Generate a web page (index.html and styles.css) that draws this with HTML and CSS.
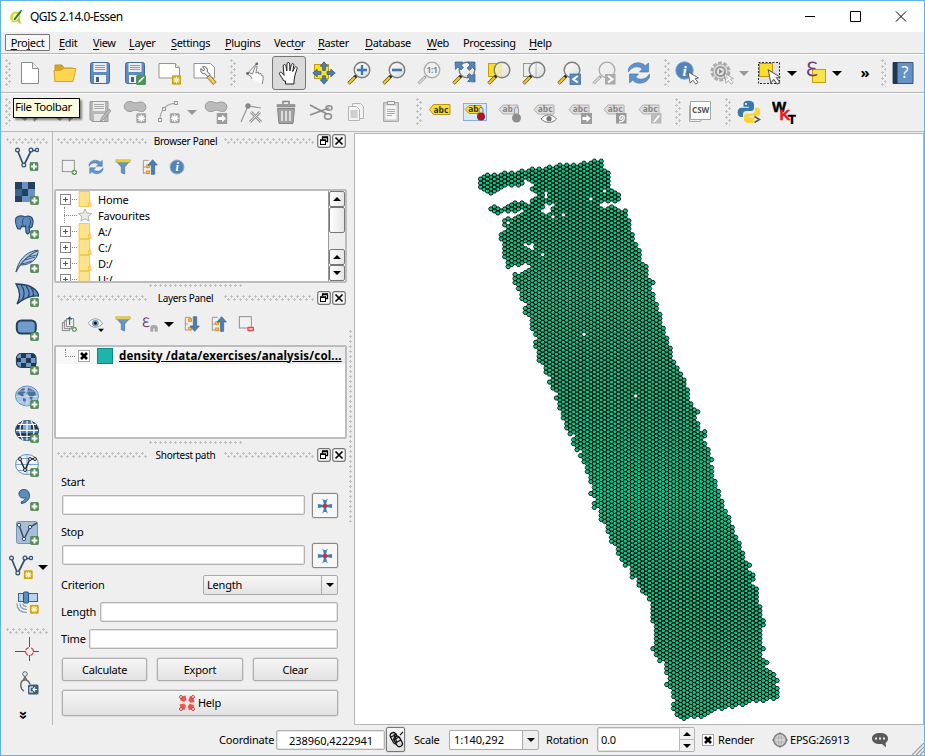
FILE: index.html
```html
<!DOCTYPE html>
<html lang="en">
<head>
<meta charset="utf-8">
<title>QGIS 2.14.0-Essen</title>
<link rel="stylesheet" href="styles.css">
</head>
<body>
<svg class="defs" aria-hidden="true">
<defs>
<linearGradient id="lens" x1="0" y1="0" x2="1" y2="1"><stop offset="0" stop-color="#fff"/><stop offset="1" stop-color="#d9dbd8"/></linearGradient>
<symbol id="plus" viewBox="0 0 9 9"><rect x=".3" y=".3" width="8.4" height="8.4" rx="1.6" fill="#568f56" stroke="#447b47" stroke-width=".6"/><path d="M4.5 1.6v5.8M1.6 4.5h5.8" stroke="#fff" stroke-width="1.9"/></symbol>
<symbol id="star" viewBox="0 0 10 10"><rect x=".3" y=".3" width="9.4" height="9.4" rx="1.4" fill="#cfa50d"/><path d="M5 1.5v7M1.5 5h7M2.4 2.6l5.2 4.8M7.6 2.6l-5.2 4.8" stroke="#fff7d5" stroke-width="1.2"/></symbol>
<symbol id="gstar" viewBox="0 0 10 10"><rect x=".3" y=".3" width="9.4" height="9.4" rx="1.4" fill="#a5a5a5"/><path d="M5 1.5v7M1.5 5h7M2.4 2.6l5.2 4.8M7.6 2.6l-5.2 4.8" stroke="#fff" stroke-width="1.2"/></symbol>
<symbol id="garrow" viewBox="0 0 11 11"><rect width="11" height="11" fill="#9c9c9c"/><path d="M1.5 4h4V1.8L9.7 5.5 5.5 9.2V7h-4z" fill="#fff"/></symbol>
<symbol id="cursor" viewBox="0 0 12 14"><path d="M1 .8l2.2 11.4 2.6-3 3 4 2.3-1.7-3-3.8 3.3-.7z" fill="#fff" stroke="#555" stroke-width=".9"/></symbol>
<symbol id="mag" viewBox="0 0 24 24"><path d="M1.500 22.500l7.300-7.300" stroke="#6b5410" stroke-width="3.400"/><path d="M1.800 22.200l6-6" stroke="#f6c728" stroke-width="2"/><circle cx="9" cy="15" r="1.600" fill="#222"/><circle cx="15" cy="9" r="7.800" fill="url(#lens)" fill-opacity=".85" stroke="#7b7d7a" stroke-width="1.400"/></symbol>
<symbol id="gmag" viewBox="0 0 24 24"><path d="M1.500 22.500l7.300-7.300" stroke="#a0a0a0" stroke-width="3"/><path d="M1.800 22.200l6-6" stroke="#ddd" stroke-width="1.500"/><circle cx="15" cy="9" r="7.800" fill="#efefef" stroke="#aaa" stroke-width="1.300"/></symbol>
<symbol id="new" viewBox="0 0 24 24"><path d="M3.500 1.500h11l6 6v15h-17z" fill="#fff" stroke="#8c8c8c"/><path d="M14.500 1.500v6h6" fill="#eee" stroke="#8c8c8c"/></symbol>
<symbol id="open" viewBox="0 0 24 24"><path d="M2 20.500V4h7l2 3h9v4" fill="#d6a52a" stroke="#c79521"/><path d="M2 20.500L1 9.500h7l2-2h13l-3 13z" fill="#fbd64e" stroke="#d5a62c"/></symbol>
<symbol id="save" viewBox="0 0 24 24"><rect x="2.500" y="1.500" width="19" height="21" rx="2" fill="#5f8cbf" stroke="#456c99"/><rect x="5.500" y="2" width="13" height="9" fill="#eee"/><path d="M7 4.500h10M7 6.500h10M7 8.500h10" stroke="#999"/><rect x="6" y="14" width="12" height="8" fill="#eef0f2"/><rect x="8" y="16" width="3" height="5" fill="#445f80"/></symbol>
<symbol id="saveas" viewBox="0 0 24 24"><use href="#save"/><rect x="13" y="14" width="10" height="10" rx="1.500" fill="#4c9457"/><path d="M15 22l1-2.500 4.500-4 1 1-4.500 4.500z" fill="#fff"/></symbol>
<symbol id="comp" viewBox="0 0 24 24"><path d="M1 2.500h16.500l4 4v10.500H1z" fill="#fff" stroke="#949494"/><path d="M17.500 2.500v4h4" fill="#eee" stroke="#949494"/><use href="#star" x="13.500" y="14" width="10" height="10"/></symbol>
<symbol id="compman" viewBox="0 0 24 24"><path d="M1 2.500h16.500l4 4v10.500H1z" fill="#fff" stroke="#949494"/><path d="M15 15l7 7.500" stroke="#ad8832" stroke-width="4.500"/><path d="M15 15l6.500 7" stroke="#f3d26e" stroke-width="2.400"/><path d="M8 7.500a3.800 3.800 0 0 0 4.300 5.300l2.500 3 2.500-2.300-3-2.700a3.800 3.800 0 0 0-4.700-5l2 2.400-1.300 1.800z" fill="#f3f3f3" stroke="#555" stroke-width=".9"/></symbol>
<symbol id="touch" viewBox="0 0 24 24"><path d="M10 18l-1-2.500-3.500-2.500 1.500-1.500 3.500 1.500L13.500 5l1.700.5-1.400 6.500 2.700-1 .3 2 2.200-.6.300 2 1.700.3.200 3-1 5.300" fill="#fff" stroke="#777" stroke-width=".9"/><path d="M5.500 12.500L15 2" stroke="#666" stroke-width=".8"/><circle cx="14.800" cy="2.800" r="1.400" fill="#666"/><circle cx="5.500" cy="12.500" r="1.400" fill="#666"/></symbol>
<symbol id="hand" viewBox="0 0 24 24"><path d="M7 20L2.500 13.200C1.500 11.500 4 10.500 5 12l2 2.300L6.200 5c0-1.900 2.400-2 2.700-.2L9.800 10 10 2.800c.1-1.800 2.500-1.800 2.700 0l.2 7 1.500-6.200c.5-1.700 2.700-1.200 2.500.6L15.700 10.500l2-4c.9-1.500 2.900-.5 2.300 1.300L18 14l-1 6v3H8.500v-3z" fill="#fff" stroke="#222"/></symbol>
<symbol id="pansel" viewBox="0 0 24 24"><rect x="2.500" y="3.500" width="14" height="14" fill="#f9df29" stroke="#c29c15"/><path d="M12 .8l3.800 4.400h-2.400v4.200h-2.800V5.200H8.200zM12 23.200l3.800-4.400h-2.400v-4h-2.800v4H8.200zM.8 12l4.400-3.800v2.400H9v2.800H5.200v2.400zM23.200 12l-4.400-3.800v2.400H15v2.800h3.800v2.400z" fill="#4d7fb4" stroke="#335c88" stroke-width=".8"/></symbol>
<symbol id="zin" viewBox="0 0 24 24"><use href="#mag"/><path d="M15 4v10M10 9h10" stroke="#3f76ad" stroke-width="2.300"/></symbol>
<symbol id="zout" viewBox="0 0 24 24"><use href="#mag"/><path d="M10 9h10" stroke="#3f76ad" stroke-width="2.600"/></symbol>
<symbol id="znat" viewBox="0 0 24 24"><use href="#gmag"/><text x="15" y="12.200" text-anchor="middle" class="ico-num">1:1</text></symbol>
<symbol id="zfull" viewBox="0 0 24 24"><use href="#mag"/><path d="M3 1h8L8.500 3.500l3 3-2.500 2.500-3-3L3.500 8.500zM23 1v8l-2.500-2.500-3 3L15 7l3-3L15.500 1zM23 21v-8l-2.500 2.500-3-3L15 15l3 3-2.500 2.500z" fill="#5585b8" stroke="#335c88" stroke-width=".7"/></symbol>
<symbol id="zsel" viewBox="0 0 24 24"><rect x="1.500" y="2.500" width="13" height="13" fill="#f9df29" stroke="#c29c15"/><use href="#mag"/><path d="M9.500 4v10a7 7 0 0 0 5 2V2a7 7 0 0 0-5 2z" fill="#f0e992" opacity=".7"/></symbol>
<symbol id="zlay" viewBox="0 0 24 24"><rect x="1.500" y="2.500" width="13" height="13" fill="#eee" stroke="#999"/><use href="#mag"/><path d="M14 2v14" stroke="#bbb"/></symbol>
<symbol id="zlast" viewBox="0 0 24 24"><use href="#mag"/><rect x="13" y="13" width="10.500" height="10.500" fill="#5c8ab9" stroke="#44719f" stroke-width=".8"/><path d="M20.800 15l-4.600 3.200 4.600 3.200" fill="none" stroke="#fff" stroke-width="1.900"/></symbol>
<symbol id="znext" viewBox="0 0 24 24"><use href="#gmag"/><rect x="13" y="13" width="10.500" height="10.500" fill="#aaa"/><path d="M16 15l4.600 3.200L16 21.400" fill="none" stroke="#fff" stroke-width="1.900"/></symbol>
<symbol id="refresh" viewBox="0 0 24 24"><path d="M1.500 11V8C4 1 14 0 18.300 4.700L21.500 2v9h-9l2.800-3C12 4.500 5 5 1.500 11z" fill="#5e92c8" stroke="#4c7eb3" stroke-width=".7"/><path d="M22.500 13v3C20 23 10 24 5.700 19.300L2.500 22v-9h9l-2.800 3c3.300 3.500 10.300 3 13.800-3z" fill="#5e92c8" stroke="#4c7eb3" stroke-width=".7"/></symbol>
<symbol id="info" viewBox="0 0 24 24"><circle cx="9.500" cy="9.500" r="8.700" fill="#5384b9" stroke="#79a2cd"/><text x="9.500" y="15" text-anchor="middle" class="ico-i">i</text><use href="#cursor" x="12" y="10" width="12" height="14"/></symbol>
<symbol id="infos" viewBox="0 0 24 24"><circle cx="12" cy="12" r="10.500" fill="#5384b9" stroke="#8cafd3" stroke-width="1.500"/><text x="12" y="18" text-anchor="middle" class="ico-i big">i</text></symbol>
<symbol id="gear" viewBox="0 0 24 24"><circle cx="10.500" cy="10.500" r="8.500" fill="none" stroke="#aaa" stroke-width="3" stroke-dasharray="3.600 1.740"/><circle cx="10.500" cy="10.500" r="7.500" fill="#ddd" stroke="#aaa"/><circle cx="10.500" cy="10.500" r="4.500" fill="#e9e9e9" stroke="#999" stroke-width="2"/><path d="M9 8v5l4-2.500z" fill="#888"/><g opacity=".5"><use href="#cursor" x="13" y="11" width="11" height="13"/></g></symbol>
<symbol id="select" viewBox="0 0 24 24"><rect x="1.500" y="1.500" width="21" height="21" fill="#e2e2e2" stroke="#222" stroke-dasharray="2 1.500"/><rect x="2.500" y="2.500" width="13" height="13" fill="#f9df29" stroke="#bd9413"/><use href="#cursor" x="10" y="8" width="14" height="16"/></symbol>
<symbol id="epsq" viewBox="0 0 24 24"><rect x="7.500" y="8.500" width="13" height="13" fill="#fbe34c" stroke="#c79c14"/><text x="1" y="15" class="ico-e">ℇ</text></symbol>
<symbol id="help" viewBox="0 0 24 24"><path d="M2 1.500h20v21H2z" fill="#6492c7" stroke="#36567a"/><path d="M2 1h4.500v22H2z" fill="#23374d"/><text x="14" y="17" text-anchor="middle" class="ico-q">?</text></symbol>
<symbol id="gpen" viewBox="0 0 24 24"><path d="M3 18l9-9 3 3-8 9zM15 18l8-9v6l-7 7z" fill="#999"/></symbol>
<symbol id="gsave" viewBox="0 0 24 24"><path d="M2 1.500h18v20H4l-2-2z" fill="#b7b7b7" stroke="#999"/><path d="M5 2h12v9H5z" fill="#eee"/><path d="M6 4.500h10M6 6.500h10M6 8.500h10" stroke="#aaa"/><path d="M6 14h10v7H6z" fill="#e6e6e6"/><path d="M12 22l2-5 7-8 2 2-7 8z" fill="#bbb" stroke="#888" stroke-width=".7"/></symbol>
<symbol id="blob" viewBox="0 0 24 24"><path d="M1.500 8C0 2.500 6 0 10.500 2.500c2.500 1.300 4-.5 7-.5 5 0 6.500 5 4.500 8-2 2.500-5 1.500-7.500.500-3.500-1.500-4 1-7.500 1C4 11.500 2 10 1.500 8z" fill="#bbb" stroke="#999"/></symbol>
<symbol id="gadd" viewBox="0 0 24 24"><use href="#blob"/><use href="#gstar" x="13" y="13" width="10.500" height="10.500"/></symbol>
<symbol id="gcurve" viewBox="0 0 24 24"><path d="M2 20C2 10 8 4 18 3" fill="none" stroke="#aaa" stroke-width="1.300"/><g fill="#eee" stroke="#999"><rect x=".5" y="18.500" width="3" height="3"/><rect x="4.500" y="7.500" width="3" height="3"/><rect x="16.500" y="1.500" width="3" height="3"/></g><use href="#gstar" x="11.500" y="13" width="10.500" height="10.500"/></symbol>
<symbol id="gmove" viewBox="0 0 24 24"><use href="#blob"/><use href="#garrow" x="12.500" y="13" width="11" height="11"/></symbol>
<symbol id="gnode" viewBox="0 0 24 24"><path d="M2 22L9 6l13 2" fill="none" stroke="#999" stroke-width="1.200"/><circle cx="9" cy="6" r="2.700" fill="#888"/><path d="M12 12l10 10M21 12l-10 10" stroke="#999" stroke-width="3"/><path d="M12 12l10 10M21 12l-10 10" stroke="#ddd" stroke-width="1"/></symbol>
<symbol id="trash" viewBox="0 0 24 24"><path d="M3.500 8.500h17l-1.500 15H5z" fill="#a2a2a2" stroke="#858585"/><path d="M3 4.500h18v2.500H3z" fill="#999" stroke="#858585" stroke-width=".6"/><path d="M9 4V1.500h6V4" fill="none" stroke="#888" stroke-width="1.500"/><path d="M8 11v10M12 11v10M16 11v10" stroke="#eee" stroke-width="1.500"/></symbol>
<symbol id="cut" viewBox="0 0 24 24"><path d="M1 5l17 9M1 15L20 8" stroke="#8d8d8d" stroke-width="1.800"/><ellipse cx="20" cy="8" rx="3" ry="2.300" fill="none" stroke="#8d8d8d" stroke-width="1.500"/><ellipse cx="19" cy="16.500" rx="3.500" ry="2.700" fill="none" stroke="#8d8d8d" stroke-width="1.500"/></symbol>
<symbol id="copy" viewBox="0 0 24 24"><g fill="#f4f4f4" stroke="#b5b5b5"><path d="M8.500 3.500h8l3 3v12h-11z"/><path d="M4.500 6.500h8l3 3v11h-11z"/></g><path d="M6.500 11h7M6.500 13h7M6.500 15h7M6.500 17h7" stroke="#aaa"/></symbol>
<symbol id="paste" viewBox="0 0 24 24"><path d="M4.500 2.500h15v19h-15z" fill="#ccc" stroke="#aaa"/><path d="M6.500 5.500h11v14h-11z" fill="#f5f5f5"/><path d="M8.500 1.500h7v3h-7z" fill="#eee" stroke="#999"/><path d="M8 9.500h8M8 11.500h8M8 13.500h8M8 15.500h5" stroke="#aaa"/></symbol>
<symbol id="abc" viewBox="0 0 24 24"><path d="M1.500 9.500l4-5h16.500v10H5.500z" fill="#fade28" stroke="#b99510"/><text x="12.900" y="12.500" text-anchor="middle" class="ico-abc">abc</text></symbol>
<symbol id="gabc" viewBox="0 0 24 24"><path d="M1 9.500l4-4.500h16v9H5z" fill="#dedede" stroke="#b0b0b0"/><text x="12.200" y="12.300" text-anchor="middle" class="ico-abc dim">abc</text></symbol>
<symbol id="abcpin" viewBox="0 0 24 24"><rect x=".5" y="3.500" width="23" height="17" fill="#dbe7f6" stroke="#86afe4"/><path d="M2 9.500l4-4h12v8H6z" fill="#fade28" stroke="#b99510"/><text x="10.500" y="12.300" text-anchor="middle" class="ico-abc">ab</text><rect x="16" y="7.500" width="4" height="7" rx="2" fill="#ddd" stroke="#777"/><circle cx="18" cy="16.500" r="4" fill="#a21c20"/></symbol>
<symbol id="gpin" viewBox="0 0 24 24"><path d="M1 9.500l4-4.500h15v9H5z" fill="#dedede" stroke="#b0b0b0"/><text x="9.700" y="12.300" text-anchor="middle" class="ico-abc dim">ab</text><rect x="16.500" y="7" width="4" height="9" rx="2" fill="#ddd" stroke="#999"/><circle cx="18.500" cy="18" r="4.500" fill="#8e8e8e"/></symbol>
<symbol id="geye" viewBox="0 0 24 24"><use href="#gabc"/><path d="M8 19c4-5.500 11-5.500 15.500 0-4 4.500-11 4.500-15.500 0z" fill="#fff" stroke="#777"/><circle cx="16" cy="18.700" r="2.600" fill="#777"/></symbol>
<symbol id="glmove" viewBox="0 0 24 24"><use href="#gabc"/><use href="#garrow" x="13" y="13" width="11" height="11"/></symbol>
<symbol id="grot" viewBox="0 0 24 24"><use href="#gabc"/><rect x="13" y="13" width="10.500" height="10.500" fill="#999"/><path d="M16 22c5 0 6-3 5-6-3-1-5 0-4 3 2 1 3-1 2-2" fill="none" stroke="#fff" stroke-width="1.300"/></symbol>
<symbol id="gedit" viewBox="0 0 24 24"><use href="#gabc"/><rect x="13" y="13" width="10.500" height="10.500" fill="#bbb"/><path d="M15 22l5.500-7 1.500 1-5 6z" fill="#fff"/></symbol>
<symbol id="csw" viewBox="0 0 24 24"><path d="M1.500 5.500v16h11l1-2" fill="#eee" stroke="#aaa"/><path d="M2.500 1.500h20v18h-20z" fill="#fff" stroke="#a5a5a5"/><text x="12.700" y="13" text-anchor="middle" class="ico-csw">CSW</text></symbol>
<symbol id="py" viewBox="0 0 24 24"><path d="M11.500.8c-4 0-5 1.500-5 3.500v2.500h5.500v1H4C1.500 8 .7 10 .7 12.500S2 17 4 17h2v-3c0-2 1.500-3 3.500-3H14c2 0 3-1 3-3V4.300C17 2 15 .8 11.500.8z" fill="#3b78a9"/><circle cx="9" cy="4" r="1" fill="#fff"/><path d="M12.500 23.200c4 0 5-1.500 5-3.500v-2.500H12v-1h8c2.500 0 3.300-2 3.300-4.500S22 7.500 20 7.500h-2v3c0 2-1.500 3-3.500 3H10c-2 0-3 1-3 3v3.200c0 2.300 2 3.500 5.500 3.500z" fill="#fbd43b"/><path d="M17.500 16.500l5 3-5 3" fill="none" stroke="#555" stroke-width="1.500"/></symbol>
<symbol id="wkt" viewBox="0 0 24 24"><text x="0" y="12" class="ico-w">W</text><text x="7.500" y="20" class="ico-w red">K</text><text x="16" y="24" class="ico-t">T</text></symbol>
<symbol id="vec" viewBox="0 0 24 24"><path d="M2.500 3.500L8 17M9.500 17L16 4M17 3.500h5" fill="none" stroke="#35516e" stroke-width="1.700"/><g fill="#d9e6f2" stroke="#35516e" stroke-width="1.200"><circle cx="2.500" cy="3" r="1.900"/><circle cx="8.800" cy="18" r="1.900"/><circle cx="16" cy="3" r="1.900"/><circle cx="22" cy="3" r="1.700"/></g></symbol>
<symbol id="avec" viewBox="0 0 24 24"><use href="#vec"/><use href="#plus" x="14.500" y="15" width="9" height="9"/></symbol>
<symbol id="aras" viewBox="0 0 24 24"><path d="M0 1h20v20H0z" fill="#6a91c1"/><path d="M0 1h7v7H0zM13 1h7v7h-7zM7 8h6v7H7zM0 15h7v6H0z" fill="#22405f"/><path d="M0 8h7v7H0z" fill="#3d6290"/><use href="#plus" x="15" y="15" width="9" height="9"/></symbol>
<symbol id="apg" viewBox="0 0 24 24"><path d="M1 3c3-3 7-2 9-1 4-2 8 0 8 4 0 5-1 7-3 7l-1-2 .5 6c-1 3-3 2-3.500 0l-.5-6c-1 1-3 1-4 0l-1 3H3C1 11 0 6 1 3z" fill="#5d8dc0" stroke="#2b4c70" stroke-width="1.200"/><path d="M9 3c-2 1-2 7 0 8M14 11c2-2 2-6 0-8" fill="none" stroke="#2b4c70"/><use href="#plus" x="15" y="15" width="9" height="9"/></symbol>
<symbol id="afea" viewBox="0 0 24 24"><path d="M1 23C3 13 9 3 23 1c1 7-6 15-17 15" fill="#b9cfe6" stroke="#2f4f70"/><path d="M1 23C5 15 10 8 22 2M7 15l10-3M10 11l10-3M13 8l9-2" fill="none" stroke="#3d5f84" stroke-width="1.200"/><use href="#plus" x="15" y="15" width="9" height="9"/></symbol>
<symbol id="amss" viewBox="0 0 24 24"><path d="M1 1c11 0 20 3 23 12-9-1-16 3-22 8 4-7 3-14-1-20z" fill="#6795c6" stroke="#1f3f60" stroke-width="1.300"/><path d="M6 1.500c4 6 4 11 1 16M11 3c4 5 4 8 2 11M16 5c3 4 3 6 2 8" fill="none" stroke="#1f3f60" stroke-width="1.200"/><use href="#plus" x="15" y="15" width="9" height="9"/></symbol>
<symbol id="aora" viewBox="0 0 24 24"><rect x="1.800" y="3.500" width="19" height="13" rx="4.500" fill="#709bcd" stroke="#23405e" stroke-width="2"/><use href="#plus" x="15" y="15" width="9" height="9"/></symbol>
<symbol id="aorr" viewBox="0 0 24 24"><rect x="1.500" y="2.500" width="19.500" height="14" rx="4.500" fill="#7299c7" stroke="#23405e" stroke-width="1.200"/><path d="M6 3h5v4H6zM16 3h4v4h-4zM2 7h4v4H2zM11 7h5v5h-5zM6 12h5v4H6zM16 12h5v4h-5z" fill="#1f3952"/><use href="#plus" x="15" y="15" width="9" height="9"/></symbol>
<symbol id="awms" viewBox="0 0 24 24"><ellipse cx="12" cy="11" rx="11.500" ry="10" fill="#a9c7e8" stroke="#6c93be"/><path d="M4 6l4-3 2 1-1 2 2 1-3 2 1 2-2 1-2-2-3-1zM13 3l3 1 4 2 1 4-3 1-1 4-2-1-1-4-3-1 1-3zM8 13l3 1-1 4-2-2z" fill="#335a84" opacity=".8"/><path d="M1 11.500h22M12 2v20M3 6h18M3 17h18" stroke="#d0e0f0" stroke-width=".6"/><use href="#plus" x="15" y="15" width="9" height="9"/></symbol>
<symbol id="awcs" viewBox="0 0 24 24"><ellipse cx="12" cy="11.500" rx="11.500" ry="10" fill="#5484b8" stroke="#23405e"/><path d="M3 5h18l2 5H1zM1 14h22l-3 5H4z" fill="#203e5d"/><path d="M8 6h8v5H8z" fill="#7fa9d6"/><path d="M1 11.500h22M3 5.500h18M3 17.500h18M12 1.500v20M8 2c-4 6-4 13 0 19M16 2c4 6 4 13 0 19" fill="none" stroke="#fff" stroke-width="1.100"/><use href="#plus" x="15" y="15" width="9" height="9"/></symbol>
<symbol id="awfs" viewBox="0 0 24 24"><ellipse cx="12" cy="11.500" rx="11.500" ry="10" fill="#eef4fa" stroke="#6390c0"/><path d="M1 11.500h22M3 5.500h18M3 17.500h18M12 1.500v20" fill="none" stroke="#7ba3cf"/><path d="M5 6l5 11 5-11h5" fill="none" stroke="#222" stroke-width="1.400"/><g fill="#fff" stroke="#222"><circle cx="5" cy="6" r="1.500"/><circle cx="10" cy="17" r="1.500"/><circle cx="15" cy="6" r="1.500"/><circle cx="20" cy="6" r="1.500"/></g><use href="#plus" x="15" y="15" width="9" height="9"/></symbol>
<symbol id="acsv" viewBox="0 0 24 24"><path d="M4 6c1-5 10-5 10.500 2 .3 4-3 8-8 8.500L6 15c3-1 4.500-2.500 4.500-4.500C7 12 3.500 10 4 6z" fill="#5d8dc0" stroke="#2c4e74"/><use href="#plus" x="15" y="15" width="9" height="9"/></symbol>
<symbol id="avir" viewBox="0 0 24 24"><rect x="1.500" y=".5" width="21" height="22" rx="2" fill="#a9bfd5" stroke="#7593b2"/><path d="M4 4l5 14 6-12 7-4" fill="none" stroke="#35516e" stroke-width="1.500"/><g fill="#eee" stroke="#35516e"><circle cx="4" cy="4" r="1.700"/><circle cx="9" cy="18" r="1.700"/><circle cx="15" cy="6" r="1.700"/></g><use href="#plus" x="15" y="15" width="9" height="9"/></symbol>
<symbol id="nshp" viewBox="0 0 24 24"><use href="#vec"/><use href="#star" x="14.500" y="15" width="9.500" height="9.500"/></symbol>
<symbol id="gps" viewBox="0 0 24 24"><rect x="3.500" y="3.500" width="19" height="8" fill="#b8d1ec" stroke="#38618d"/><rect x="8.500" y="2" width="5" height="11" rx="1" fill="#5b8cc0" stroke="#2c527b"/><path d="M2 13.500c0 6 4 9 10 9M5 13.500c0 4 3 6 7 6M8 13.500c0 2 1 3 4 3" fill="none" stroke="#7e98b3" stroke-width="1.200"/><use href="#star" x="14.500" y="14.500" width="9.500" height="9.500"/></symbol>
<symbol id="cross" viewBox="0 0 24 24"><path d="M14.500 0v10M14.500 18v6M0 14.500h11M18 14.500h6" stroke="#555"/><circle cx="14.500" cy="14.500" r="4" fill="none" stroke="#c84b4b" stroke-width="1.300" stroke-dasharray="4 2.280" stroke-dashoffset="-1.200"/></symbol>
<symbol id="dist" viewBox="0 0 24 24"><circle cx="10" cy="3" r="2.300" fill="none" stroke="#666"/><path d="M10 5.500L8.500 9C4.500 11 5 18 9 20M11.500 9c2 1 3 2 3.500 4M8.500 9h3L10 5.500" fill="none" stroke="#666" stroke-width="1.400"/><rect x="13" y="13.500" width="10.500" height="10" rx="1.500" fill="#3c6078"/><path d="M15 16h3M15 16v5h3M22 18.500h-4m2-2l-2 2 2 2" fill="none" stroke="#fff" stroke-width="1.100"/></symbol>
<symbol id="addl" viewBox="0 0 24 24"><rect x="2" y="2" width="18" height="17" fill="#f1f1f1" stroke="#8c8c8c" stroke-width="1.400"/><circle cx="20" cy="20" r="4" fill="#568f56"/><path d="M20 17.500v5M17.500 20h5" stroke="#fff" stroke-width="1.500"/></symbol>
<symbol id="reml" viewBox="0 0 24 24"><rect x="2" y="1" width="18" height="17" fill="#f1f1f1" stroke="#8c8c8c" stroke-width="1.400"/><rect x="14" y="16" width="10" height="7" rx="1.500" fill="#e5484d"/><path d="M16 19.500h6" stroke="#fff" stroke-width="1.800"/></symbol>
<symbol id="filter" viewBox="0 0 24 24"><path d="M1.500 3h21l-8 9v10.500l-5-2V12z" fill="#6794c4" stroke="#456f9d"/><path d="M1 1h22v4H1z" fill="#edcf31" stroke="#a4a55c" stroke-width=".6"/></symbol>
<symbol id="up" viewBox="0 0 24 24"><path d="M2 2v20M2 2h8M2 12h4M2 21h4" stroke="#999" stroke-width="1.500"/><g fill="#ffc66b" stroke="#e58b0b" stroke-width="1.500"><rect x="7" y="9" width="4" height="4"/><rect x="7" y="18" width="4" height="4"/></g><path d="M16 1l7 8h-4v14h-5V9H9z" fill="#4c7eb1" stroke="#34618f"/></symbol>
<symbol id="down" viewBox="0 0 24 24"><path d="M2 2v20M2 2h8M2 12h4M2 21h4" stroke="#999" stroke-width="1.500"/><g fill="#ffc66b" stroke="#e58b0b" stroke-width="1.500"><rect x="7" y="4" width="4" height="4"/><rect x="7" y="17" width="4" height="4"/></g><path d="M16 23l7-8h-4V1h-5v14H9z" fill="#4c7eb1" stroke="#34618f"/></symbol>
<symbol id="grp" viewBox="0 0 24 24"><g fill="#eee" stroke="#777" stroke-width="1.300"><path d="M2 10h11v12H2z"/><path d="M5 7h11v12H5z"/><path d="M8 4h11v12H8z"/></g><path d="M13 13V2l-3 3M13 2l3 3" fill="none" stroke="#2c4c6a" stroke-width="1.600"/><circle cx="20" cy="20" r="3.800" fill="#568f56"/><path d="M20 17.500v5M17.500 20h5" stroke="#fff" stroke-width="1.300"/></symbol>
<symbol id="eye" viewBox="0 0 24 24"><path d="M0 11c6-9 16-9 22 0-6 8-16 8-22 0z" fill="#f8f8f8" stroke="#999" stroke-width="1.400"/><circle cx="11" cy="11" r="5" fill="#6f9cc9"/><circle cx="11" cy="11" r="2.200" fill="#111"/><path d="M15 19h9l-4.500 5z"/></symbol>
<symbol id="epf" viewBox="0 0 24 24"><text x="0" y="16" class="ico-e">ℇ</text><path d="M13 23v-6c0-4 10-4 10 0v6h-3.500v-5h-3v5z" fill="#aaa" stroke="#8d8d8d" stroke-width=".7"/></symbol>
<symbol id="pick" viewBox="0 0 16 16"><path d="M8 2v4M8 10v4M1 8h5M10 8h5" stroke="#2586c9" stroke-width="2.600"/><path d="M5.700.8l1.600 4M10.300.8l-1.600 4M5.700 15.200l1.600-4M10.300 15.200l-1.600-4M.8 6.300l4 1M15.200 6.300l-4 1M.8 9.700l4-1M15.200 9.700l-4-1" stroke="#4f7fa3" stroke-width=".9"/><circle cx="8" cy="8" r="2.300" fill="#d42d31"/></symbol>
<symbol id="buoy" viewBox="0 0 16 16"><circle cx="8" cy="8" r="5.200" fill="none" stroke="#e8e8e8" stroke-width="5"/><circle cx="8" cy="8" r="5.200" fill="none" stroke="#ef5350" stroke-width="4.800" stroke-dasharray="5 3.170" stroke-dashoffset="-1.600"/><g fill="none" stroke="#b4484b"><circle cx="2" cy="2" r="1.500"/><circle cx="14" cy="2" r="1.500"/><circle cx="2" cy="14" r="1.500"/><circle cx="14" cy="14" r="1.500"/></g></symbol>
<symbol id="mouse" viewBox="0 0 16 18"><g fill="#ddd" stroke="#111" stroke-width="1.300"><rect x="3.500" y="1" width="6" height="12" rx="3" transform="rotate(-28 7 7)"/><rect x="7" y="5" width="6" height="11" rx="3" transform="rotate(-28 10 10)"/></g><path d="M3 6l6-3M5 9l6-3M7 12l6-3M6 3l3 9M12 4l3-3" stroke="#111" stroke-width="1.200"/></symbol>
<symbol id="globe" viewBox="0 0 16 16"><circle cx="8" cy="8" r="7" fill="#858585"/><path d="M8 0l2 2H6zM8 16l2-2H6zM0 8l2-2v4zM16 8l-2-2v4z" fill="#777"/><circle cx="8" cy="8" r="5" fill="#aaa" stroke="#ddd" stroke-width=".8"/><path d="M8 3v10M3 8h10M6 3.500c-1.500 3-1.500 6 0 9M10 3.500c1.500 3 1.500 6 0 9" stroke="#eee" stroke-width=".8" fill="none"/></symbol>
<symbol id="bubble" viewBox="0 0 16 16"><path d="M8 1c5 0 8 2 8 5.500 0 2-1 3.500-2.500 4.500l.5 4.500-4-3.500H8c-5 0-8-2-8-5.500S3 1 8 1z" fill="#5a5a5a"/><path d="M3 5.500h2v2H3zM7 5.500h2v2H7zM11 5.500h2v2h-2z" fill="#eee"/></symbol>
<symbol id="float" viewBox="0 0 14 14"><rect x=".7" y=".7" width="12.600" height="12.600" rx="2" fill="#f7f7f7" stroke="#777" stroke-width="1.200"/><path d="M5.500 5.500V3.500h5v4H9M5 3h6" fill="none" stroke="#000" stroke-width="1.300"/><rect x="3.500" y="6.500" width="5" height="4" fill="#fff" stroke="#000"/><path d="M3 6h6" stroke="#000" stroke-width="1.500"/></symbol>
<symbol id="close" viewBox="0 0 14 14"><rect x=".7" y=".7" width="12.600" height="12.600" rx="2" fill="#f7f7f7" stroke="#777" stroke-width="1.200"/><path d="M3.500 3.500l7 7M10.500 3.500l-7 7" stroke="#000" stroke-width="1.700"/></symbol>
<symbol id="folder" viewBox="0 0 14 16"><path d="M1 .5h10.500v10l1.500 1v4H1z" fill="#ffe28e" stroke="#f0cb58"/><path d="M11 11v4" stroke="#e5bb3f"/></symbol>
<symbol id="fav" viewBox="0 0 16 16"><path d="M8 1l2.200 4.700 5.300.6-3.900 3.500 1.100 5.200L8 12.400 3.300 15l1.100-5.200L.5 6.300l5.300-.6z" fill="#e9ede4" stroke="#a4aa9f"/></symbol>
</defs>
</svg>

<div class="window">
  <header class="titlebar">
    <svg class="logo" viewBox="0 0 16 16"><path d="M7 2C2 2 0 8 2 12c3 3 9 2 10-3 1-4-1-7-5-7z" fill="#cfdc3c"/><path d="M7 4c-3 1-4 6-2 8 3 1 5-1 5-5z" fill="#f7f8cf"/><path d="M5 10L12 1l2-1-1 3-7 9z" fill="#1d7a2c"/><path d="M8 11l3 4h2l-2-5z" fill="#b8c72f"/></svg>
    <span class="title">QGIS 2.14.0-Essen</span>
    <svg class="wbtns" viewBox="0 0 110 30"><path d="M3 14.500h10M48.500 9.500h10v10h-10zM94 9.500l10 10M104 9.500l-10 10" fill="none" stroke="#000"/></svg>
  </header>
  <nav class="menubar">
    <span class="on"><u>P</u>ro<u>j</u>ect</span><span style="width:34px"><u>E</u>dit</span><span style="width:36px"><u>V</u>iew</span><span style="width:42px"><u>L</u>ayer</span><span style="width:54px"><u>S</u>ettings</span><span style="width:49px"><u>P</u>lugins</span><span style="width:44px">Vect<u>o</u>r</span><span style="width:47px"><u>R</u>aster</span><span style="width:62px"><u>D</u>atabase</span><span style="width:36px"><u>W</u>eb</span><span style="width:66px">Pro<u>c</u>essing</span><span style="width:30px"><u>H</u>elp</span>
  </nav>
  <div class="toolbar">
    <i class="grip" style="width:11.5px"></i>
    <b><svg><use href="#new"/></svg></b><b><svg><use href="#open"/></svg></b><b><svg><use href="#save"/></svg></b><b><svg><use href="#saveas"/></svg></b><b><svg><use href="#comp"/></svg></b><b><svg><use href="#compman"/></svg></b>
    <i class="grip far" style="width:14px"></i>
    <b><svg><use href="#touch"/></svg></b><b class="pressed"><svg><use href="#hand"/></svg></b><b><svg><use href="#pansel"/></svg></b><b><svg><use href="#zin"/></svg></b><b><svg><use href="#zout"/></svg></b><b><svg><use href="#znat"/></svg></b><b><svg><use href="#zfull"/></svg></b><b><svg><use href="#zsel"/></svg></b><b><svg><use href="#zlay"/></svg></b><b><svg><use href="#zlast"/></svg></b><b><svg><use href="#znext"/></svg></b><b><svg><use href="#refresh"/></svg></b>
    <i class="grip far" style="width:13px"></i>
    <b><svg><use href="#info"/></svg></b><b><svg><use href="#gear"/></svg></b><i class="dd dim" style="width:12px"></i>
    <b><svg><use href="#select"/></svg></b><i class="dd" style="width:13px"></i>
    <b><svg><use href="#epsq"/></svg></b><i class="dd" style="width:8px"></i><span class="more">»</span>
    <i class="grip" style="width:9px"></i>
    <b><svg><use href="#help"/></svg></b>
  </div>
  <div class="toolbar second">
    <i class="grip" style="width:11.5px"></i>
    <b><svg><use href="#gpen"/></svg></b><b><svg><use href="#gpen"/></svg></b><b><svg><use href="#gsave"/></svg></b><b><svg><use href="#gadd"/></svg></b><b><svg><use href="#gcurve"/></svg></b><i class="dd dim" style="width:11px"></i>
    <b><svg><use href="#gmove"/></svg></b><b><svg><use href="#gnode"/></svg></b><b><svg><use href="#trash"/></svg></b><b><svg><use href="#cut"/></svg></b><b><svg><use href="#copy"/></svg></b><b><svg><use href="#paste"/></svg></b>
    <i class="grip far" style="width:14px"></i>
    <b><svg><use href="#abc"/></svg></b><b><svg><use href="#abcpin"/></svg></b><b><svg><use href="#gpin"/></svg></b><b><svg><use href="#geye"/></svg></b><b><svg><use href="#glmove"/></svg></b><b><svg><use href="#grot"/></svg></b><b><svg><use href="#gedit"/></svg></b>
    <i class="grip far" style="width:15px"></i>
    <b><svg><use href="#csw"/></svg></b>
    <i class="grip far" style="width:14px"></i>
    <b><svg><use href="#py"/></svg></b><b><svg><use href="#wkt"/></svg></b>
    <div class="tooltip">File Toolbar</div>
  </div>
  <div class="main">
    <aside class="side">
      <i class="hgrip"></i>
      <b><svg><use href="#avec"/></svg></b><b><svg><use href="#aras"/></svg></b><b><svg><use href="#apg"/></svg></b><b><svg><use href="#afea"/></svg></b><b><svg><use href="#amss"/></svg></b><b><svg><use href="#aora"/></svg></b><b><svg><use href="#aorr"/></svg></b><b><svg><use href="#awms"/></svg></b><b><svg><use href="#awcs"/></svg></b><b><svg><use href="#awfs"/></svg></b><b><svg><use href="#acsv"/></svg></b><b><svg><use href="#avir"/></svg></b><b class="split"><svg><use href="#nshp"/></svg><i class="dd"></i></b><b class="lower"><svg><use href="#gps"/></svg></b>
      <i class="hgrip low"></i>
      <b><svg><use href="#cross"/></svg></b><b><svg><use href="#dist"/></svg></b>
      <span class="more down">»</span>
    </aside>
    <div class="docks">
      <section class="dock browser">
        <h2><i class="hgrip"></i><span>Browser Panel</span><i class="hgrip"></i><svg><use href="#float"/></svg><svg><use href="#close"/></svg></h2>
        <div class="tools"><svg><use href="#addl"/></svg><svg><use href="#refresh"/></svg><svg><use href="#filter"/></svg><svg><use href="#up"/></svg><svg><use href="#infos"/></svg></div>
        <div class="box tree">
          <ul>
            <li class="x"><svg><use href="#folder"/></svg>Home</li>
            <li><svg><use href="#fav"/></svg>Favourites</li>
            <li class="x"><svg><use href="#folder"/></svg>A:/</li>
            <li class="x"><svg><use href="#folder"/></svg>C:/</li>
            <li class="x"><svg><use href="#folder"/></svg>D:/</li>
            <li class="x"><svg><use href="#folder"/></svg>U:/</li>
          </ul>
          <div class="scroll"><i class="sb up"></i><i class="thumb"></i><i class="track"></i><i class="sb up"></i><i class="sb dn"></i></div>
        </div>
      </section>
      <i class="splitter"></i>
      <section class="dock layers">
        <h2><i class="hgrip"></i><span>Layers Panel</span><i class="hgrip"></i><svg><use href="#float"/></svg><svg><use href="#close"/></svg></h2>
        <div class="tools"><svg><use href="#grp"/></svg><svg><use href="#eye"/></svg><svg><use href="#filter"/></svg><svg><use href="#epf"/></svg><i class="dd"></i><svg><use href="#down"/></svg><svg><use href="#up"/></svg><svg><use href="#reml"/></svg></div>
        <div class="box list">
          <div class="layer"><i class="branch"></i><i class="check"><svg viewBox="0 0 8 8"><path d="M1 1l6 6M7 1L1 7"/></svg></i><i class="swatch"></i><span>density /data/exercises/analysis/col...</span></div>
        </div>
      </section>
      <i class="splitter"></i>
      <section class="dock path">
        <h2><i class="hgrip"></i><span>Shortest path</span><i class="hgrip"></i><svg><use href="#float"/></svg><svg><use href="#close"/></svg></h2>
        <form>
          <label class="above">Start</label>
          <div class="row pt"><i class="field"></i><i class="btn pick"><svg><use href="#pick"/></svg></i></div>
          <label class="above second-l">Stop</label>
          <div class="row pt"><i class="field"></i><i class="btn pick"><svg><use href="#pick"/></svg></i></div>
          <div class="row crit"><label>Criterion</label><span class="combo">Length<i class="arr"></i></span></div>
          <div class="row ln"><label style="width:38px">Length</label><i class="field"></i></div>
          <div class="row ln"><label style="width:27px">Time</label><i class="field"></i></div>
          <div class="row acts"><span class="btn">Calculate</span><span class="btn">Export</span><span class="btn">Clear</span></div>
          <div class="row hl"><span class="btn"><svg><use href="#buoy"/></svg>Help</span></div>
        </form>
      </section>
    </div>
    <div class="vsplit"><i></i></div>
    <div class="map"><svg viewBox="355 134 568 588" width="568" height="588"><path id="cells" fill="#10c388" stroke="#03110c" stroke-width=".9"/></svg></div>
  </div>
  <footer class="status">
    <label style="width:57px">Coordinate</label><span class="field coord">238960,4222941</span><i class="btn mouse"><svg><use href="#mouse"/></svg></i>
    <label style="width:35px">Scale</label><span class="combo scale">1:140,292<i class="arr"></i></span>
    <label style="width:51px">Rotation</label><span class="field spin">0.0<i class="sp"><i></i><i></i></i></span>
    <i class="check"><svg viewBox="0 0 8 8"><path d="M1 1l6 6M7 1L1 7"/></svg></i><label style="width:54px">Render</label>
    <svg class="globe"><use href="#globe"/></svg><label style="width:82px">EPSG:26913</label><svg class="globe"><use href="#bubble"/></svg>
    <svg class="resize" viewBox="0 0 12 12"><path d="M0 12L12 0M4 12l8-8M8 12l4-4" stroke="#999" stroke-width="1.200"/></svg>
  </footer>
</div>
<script src="map.js"></script>
</body>
</html>
```
FILE: styles.css
```css
* { box-sizing: border-box; }
body { margin: 0; font: 11px/14px "Noto Sans", "Open Sans", sans-serif; letter-spacing: -.35px; color: #000; background: #efefef; }
i { font-style: normal; display: block; }
.defs { position: absolute; width: 0; height: 0; }
.window { width: 925px; height: 756px; border: 1px solid #64b2ea; background: #efefef; display: flex; flex-direction: column; overflow: hidden; }
.titlebar { height: 31px; background: #fff; display: flex; align-items: center; padding: 0 12px 0 8px; flex: none; }
.logo { width: 15px; height: 16px; }
.title { margin-left: 6px; font-size: 12px; letter-spacing: -.55px; }
.wbtns { width: 110px; height: 30px; margin-left: auto; }
.menubar { height: 21px; display: flex; align-items: center; padding-left: 4px; flex: none; white-space: nowrap; }
.menubar span { padding-top: 1px; }
.menubar .on { width: 45px; height: 17px; border: 1px solid #777; border-radius: 1px; background: #f7f7f7; text-align: center; line-height: 15px; margin-right: 9px; padding: 0; }
.menubar u { text-underline-offset: 1.5px; }
.toolbar { height: 39px; border-top: 1px solid #b8b8b8; box-shadow: inset 0 1px #fff; display: flex; align-items: center; flex: none; position: relative; }
.toolbar b, .side b { width: 35px; height: 34px; display: flex; align-items: center; justify-content: center; flex: none; }
.toolbar svg, .side svg { width: 24px; height: 24px; }
.toolbar .pressed { border: 1px solid #777; border-radius: 3px; background: #dadada; margin: 0 .5px; width: 34px; }
.grip { height: 28px; flex: none; background-image: radial-gradient(circle at 1.5px 1.5px, #c1c1c1 1px, transparent 1.4px), radial-gradient(circle at 1.5px 1.5px, #c1c1c1 1px, transparent 1.4px); background-size: 6px 6px; background-position: 4px 0, 7px 3px; background-repeat: repeat-y; }
.grip.far { background-position: 7px 0, 10px 3px; }
.hgrip { height: 6px; background: radial-gradient(circle at 1.5px 1.5px, #c1c1c1 1px, transparent 1.4px) 0 0/6px 6px repeat-x, radial-gradient(circle at 1.5px 1.5px, #c1c1c1 1px, transparent 1.4px) 3px 3px/6px 6px repeat-x; }
.dd { flex: none; display: flex; justify-content: center; align-items: center; }
.dd::before, .arr::before { content: ""; border: 5px solid transparent; border-top-color: #000; border-bottom: 0; }
.dd.dim::before { border-top-color: #999; }
.toolbar .dd::before { margin-right: 3px; }
.more { font-size: 15px; font-weight: 700; width: 34px; padding-left: 18px; line-height: 30px; padding-bottom: 3px; }
.tooltip { position: absolute; left: 12px; top: 5px; width: 67px; height: 20px; border: 1px solid #000; background: #ffffe1; box-shadow: 2px 2px 2px rgba(0,0,0,.45); padding-left: 1px; line-height: 16px; letter-spacing: -.45px; font-size: 11.5px; white-space: nowrap; }
.ico-num { font: bold 8.5px "Noto Sans", sans-serif; fill: #8a8a8a; letter-spacing: -.3px; }
.ico-i { font: italic bold 15px "Liberation Serif", serif; fill: #fff; }
.ico-i.big { font-size: 18px; }
.ico-e { font: 20px "DejaVu Serif", serif; fill: #6a3b72; }
.ico-q { font: 16px "Noto Sans", sans-serif; fill: #fff; letter-spacing: 0; }
.ico-abc { font: bold 8.5px "Noto Sans", sans-serif; fill: #333; letter-spacing: 0; }
.ico-abc.dim { fill: #888; }
.ico-csw { font: bold 8px "Noto Sans", sans-serif; fill: #555; letter-spacing: 0; }
.ico-w { font: bold 15px "Liberation Sans", sans-serif; fill: #000; stroke: #000; stroke-width: .5; letter-spacing: 0; }
.ico-w.red { fill: #ee1c1c; stroke: #ee1c1c; }
.ico-t { font: bold 13px "Liberation Sans", sans-serif; stroke: #000; stroke-width: .4; }
.main { flex: none; height: 594px; border-top: 1px solid #b8b8b8; display: flex; }
.side { width: 52px; border-right: 1px solid #b8b8b8; display: flex; flex-direction: column; align-items: flex-start; padding-left: 5px; position: relative; }
.side b { width: 42px; }
.side b.lower { padding-top: 2px; }
.side > .hgrip { width: 42px; margin: 6px 0 -2px; flex: none; }
.side > .hgrip.low { margin: 10px 0 -2px; }
.side .split { width: 46px; justify-content: flex-start; padding-left: 3px; }
.side .split .dd { margin-left: 5px; }
.more.down { transform: rotate(90deg); width: 20px; height: 20px; line-height: 18px; padding: 0; text-align: center; margin: 5px 0 0 7px; font-size: 14px; }
.docks { width: 293px; margin-left: 1px; flex: none; }
.dock h2 { margin: 0; height: 16px; font: inherit; font-size: 10px; letter-spacing: -.3px; display: flex; align-items: center; padding: 0 1px 0 3px; }
.dock h2 .hgrip { width: 90px; }
.dock h2 span { flex: 1; text-align: center; white-space: nowrap; }
.dock h2 svg { width: 14px; height: 14px; margin-left: 1px; }
.dock h2 .hgrip + svg { margin-left: 3px; }
.dock { padding-top: 1px; }
.browser { height: 151px; }
.tools { height: 35px; display: flex; align-items: center; padding-left: 7px; gap: 11px; }
.tools svg { width: 16px; height: 16px; flex: none; }
.browser .tools { height: 36px; }
.box { background: #fff; border: 2px solid #bdbdbd; border-radius: 2px; overflow: hidden; }
.tree { height: 94px; margin-top: 4px; display: flex; justify-content: space-between; }
.tree ul { margin: 0; padding: 0 0 0 8px; list-style: none; font-size: 11px; }
.tree li { height: 16px; display: flex; align-items: center; padding-left: 14px; position: relative; letter-spacing: -.2px; padding-top: 1px; }
.tree li::before { content: ""; position: absolute; left: 0; width: 13px; top: 8px; border-top: 1px dotted #888; }
.tree li::after { content: ""; position: absolute; left: 0; height: 16px; top: 0; border-left: 1px dotted #888; }
.tree li.x::after { left: -4px; top: 3px; width: 9px; height: 9px; border: 1px solid #888; background: linear-gradient(#555,#555) center/5px 1px no-repeat, linear-gradient(#555,#555) center/1px 5px no-repeat, #fff; }
.tree li svg { width: 14px; height: 16px; margin-right: 6px; margin-top: -1px; }
.scroll { width: 17px; display: flex; flex-direction: column; border-left: 1px solid #999; }
.scroll i { border: 1px solid #777; border-radius: 2px; background: linear-gradient(90deg,#fff,#e5e5e5); flex: none; }
.scroll .sb { height: 16px; display: flex; justify-content: center; align-items: center; }
.sb::before { content: ""; border: 4px solid transparent; border-bottom-color: #000; border-top: 0; }
.sb.dn::before { transform: rotate(180deg); }
.scroll .thumb { height: 26px; }
.scroll .track { height: 16px; border: 0; background: #eee; }
.splitter { width: 93px; height: 3px; margin: 1px auto 2px 95px; background: radial-gradient(circle at 1.5px 1.5px, #c1c1c1 1px, transparent 1.4px) 0 0/5px 3px; }
.layers { height: 151px; }
.layers .tools .dd { width: 10px; margin: 0 -5px; }
.layers .tools .dd + svg { margin-left: 4px; }
.layers .tools { margin-top: 1px; height: 34px; }
.list { height: 94px; margin-top: 4px; }
.layer { height: 17px; background: linear-gradient(90deg,#f8f8f8,#ececec); display: flex; align-items: center; font-weight: 700; white-space: nowrap; }
.layer span { text-decoration: underline; margin-left: 6px; font-size: 11.5px; letter-spacing: .18px; }
.branch { width: 10px; height: 8px; border: dotted #888; border-width: 0 0 1px 1px; margin: -6px 3px 0 9px; }
.check { width: 12px; height: 12px; border: 1px solid #aaa; background: #fff; padding: 1px; flex: none; }
.check svg { display: block; width: 8px; height: 8px; }
.check path { stroke: #000; stroke-width: 2.6; }
.swatch { width: 16px; height: 16px; background: #1cb5ad; border: 1px solid #15857f; margin-left: 7px; flex: none; }
form { padding: 0 9px 0 8px; letter-spacing: -.2px; }
.above { display: block; margin-top: 12px; height: 14px; margin-left: -1px; }
.second-l { margin-top: 7px; }
.row { display: flex; align-items: center; }
.pt { height: 25px; margin-top: 4px; justify-content: space-between; }
.pt .field { width: 243px; margin-top: -1px; }
.field { height: 20px; background: #fff; border: 1px solid #b2b2b2; border-radius: 2px; box-shadow: inset 0 0 0 1px #e4e4e4; }
.btn { border: 1px solid #adadad; border-radius: 2px; background: linear-gradient(#f6f6f6,#e2e2e2); display: flex; justify-content: center; align-items: center; box-shadow: 0 0 0 .5px #ccc; }
.pick { width: 26px; height: 25px; background: #f7f7f7; border-color: #888; }
.pick svg { width: 16px; height: 16px; }
.crit { height: 20px; margin-top: 7px; justify-content: space-between; }
.row label { margin-left: -1px; }
.row label + .field { flex: 1; margin-left: 1px; }
.combo { width: 135px; height: 20px; border: 1px solid #aaa; border-radius: 2px; background: linear-gradient(#f7f7f7,#e4e4e4); display: flex; align-items: center; padding-left: 3px; }
.arr { margin-left: auto; width: 16px; height: 100%; border-left: 1px solid #aaa; display: flex; align-items: center; justify-content: center; }
.arr::before { border-width: 4px 4px 0; }
.ln { height: 20px; margin-top: 7px; }
.acts { margin-top: 9px; gap: 10px; }
.acts .btn { height: 23px; flex: 1; }
.hl { margin-top: 9px; }
.hl .btn { height: 26px; width: 100%; gap: 3px; }
.hl svg { width: 16px; height: 16px; }
.vsplit { width: 7px; padding: 198px 0 0 2px; flex: none; }
.vsplit i { width: 3px; height: 192px; background: radial-gradient(circle at 1.5px 1.5px, #c1c1c1 1px, transparent 1.4px) 0 0/3px 5px; }
.map { width: 570px; height: 592px; border: 1px solid #b5b5b5; background: #fff; overflow: hidden; margin-top: 1px; flex: none; }
.map svg { display: block; }
.status { flex: 1; display: flex; align-items: center; padding-left: 218px; letter-spacing: -.2px; position: relative; white-space: nowrap; padding-bottom: 1px; }
.status > * { flex: none; }
.coord { width: 109px; padding-left: 12px; line-height: 19px; letter-spacing: -.05px; }
.mouse { width: 19px; height: 25px; margin: 0 9px 0 1px; border-color: #777; }
.mouse svg { width: 16px; height: 18px; }
.scale { width: 90px; margin-right: 7px; padding-left: 4px; background: linear-gradient(90deg,#fff 72px,#eee 72px); letter-spacing: 0; }
.spin { width: 98px; height: 25px; margin-right: 7px; padding-left: 3px; line-height: 23px; display: flex; justify-content: space-between; }
.sp { width: 15px; border-left: 1px solid #bbb; background: #f0f0f0; }
.sp i { height: 12px; display: flex; align-items: center; justify-content: center; border-bottom: 1px solid #bbb; }
.sp i::before { content: ""; border: 4px solid transparent; border-bottom-color: #000; border-top: 0; }
.sp i + i::before { transform: rotate(180deg); }
.sp i + i { border: 0; }
.status .check + label { margin-left: 4px; }
.globe { width: 16px; height: 16px; margin-right: 2px; }
.resize { position: absolute; right: 0; bottom: 0; width: 12px; height: 12px; }
```
FILE: map.js
```js
// Hexagonal density grid, clipped to the survey outline.
// Outline vertices are in thirds of a pixel, relative to each sheet's origin.
const sheets = [
  [1380, 450, '55,85 70,75 85,70 105,70 130,65 165,65 185,58 203,60 217,52 265,48 320,39 360,40 405,27 431,27 433,55 451,65 453,120 478,123 484,133 483,152 468,160 455,150 440,158 422,160 432,175 455,166 480,180 502,178 504,205 514,210 514,228 508,240 522,250 525,272 535,285 545,300 546,335 566,343 566,365 560,378 587,398 578,410 580,428 587,440 590,460'],
  [1500, 870, '466,15 468,35 478,45 478,62 487,72 488,105 497,115 498,135 508,145 508,165 518,172 518,205 528,215 528,228 538,235 542,248 550,258 560,270 560,290 570,300 570,330 580,342 585,355 601,367 590,380 592,393 601,400 601,415 608,425 618,416 621,440 611,450 620,460 621,472 631,480 632,500 642,510 635,525 641,540 641,562 652,575 652,590 662,600 663,625 673,635 675,655 683,665'],
  [1710, 1470, '484,80 485,100 495,112 495,132 505,145 514,158 515,178 525,190 526,210 546,226 535,240 545,248 557,255 555,272 543,280 566,293 567,340 577,350 578,382 587,390 587,410 577,415 577,465 588,477 577,485 577,502 598,518 585,532 610,545 620,555 619,565 630,572 622,585 629,595 629,627 590,633 560,637 528,643 487,655 455,660 435,664 405,680 373,687 360,680 343,692 315,675 303,655 303,635 312,630 303,620 303,598 282,585 293,570 295,555 284,552 283,520 263,515 253,497 242,477 253,465 253,405 243,395 243,335 232,327 240,318 220,314 212,305 212,293 202,290 200,268 182,268 180,235 160,228 150,210 140,195 138,170 118,158 118,133 108,128 108,102 88,95 88,60 70,58 66,40 78,25 54,12'],
  [1500, 870, '278,598 276,583 267,575 267,555 257,550 256,525 246,520 245,508 234,498 245,488 225,482 225,470 215,465 216,445 225,437 205,435 205,422 195,418 194,393 184,388 184,360 174,358 174,332 162,325 170,312 170,305 153,300 153,285 141,277 152,262 133,250 133,228 112,215 111,185 100,172 100,152 112,142 100,132 100,122 91,118 90,82 70,72 68,52 80,40'],
  [1380, 450, '190,460 180,450 180,425 170,420 160,400 160,370 178,368 205,350 190,342 170,350 150,358 138,355 138,335 128,325 128,300 136,290 128,280 118,270 118,248 130,242 137,232 127,227 127,206 145,203 170,197 190,188 207,178 190,180 150,192 130,188 112,197 85,182 88,170 105,163 120,170 150,158 190,150 210,165 212,148 234,140 222,130 208,118 218,105 210,95 195,92 180,112 150,108 110,130 93,138 75,127 55,118']
];
const outline = sheets.flatMap(([ox, oy, s]) => s.split(' ').map(p => {
  const [x, y] = p.split(',').map(Number);
  return [(x + ox) / 3, (y + oy) / 3];
}));
const gap = [[541, 210], [544, 207], [542, 203], [550, 205], [555.5, 204], [551, 209], [550, 214], [546, 215.5], [541, 212]];
const holes = [[584, 334.3], [635.7, 396.3], [546.3, 193.5], [546.3, 198], [591, 199.3], [604.7, 191.3], [553.3, 217.3], [563.7, 215.3], [509, 223], [543, 255], [526.7, 245.7], [530, 247], [533, 245], [532.5, 249]];
function inside(poly, x, y) {
  let r = false;
  for (let i = 0, j = poly.length - 1; i < poly.length; j = i++) {
    const [a, b] = poly[i], [c, d] = poly[j];
    if ((b > y) !== (d > y) && x < (c - a) * (y - b) / (d - b) + a) r = !r;
  }
  return r;
}
const dx = 3.447, dy = 3.98, side = dy / Math.sqrt(3), m = .8;
const covered = (x, y) => inside(outline, x, y - m) && inside(outline, x, y + m) && inside(outline, x - m, y) && inside(outline, x + m, y);
let d = '';
for (let i = -32; i < 60; i++) {
  for (let j = -46; j < 100; j++) {
    const x = 584 + i * dx, y = 334.3 + j * dy + (i & 1 ? dy / 2 : 0);
    if (!covered(x, y) || inside(gap, x, y)) continue;
    if (holes.some(h => Math.hypot(h[0] - x, h[1] - y) < 1.9)) continue;
    const f = n => n.toFixed(2);
    d += `M${f(x - side)} ${f(y)}L${f(x - side / 2)} ${f(y - dy / 2)}H${f(x + side / 2)}L${f(x + side)} ${f(y)}L${f(x + side / 2)} ${f(y + dy / 2)}H${f(x - side / 2)}Z`;
  }
}
document.getElementById('cells').setAttribute('d', d);
```
